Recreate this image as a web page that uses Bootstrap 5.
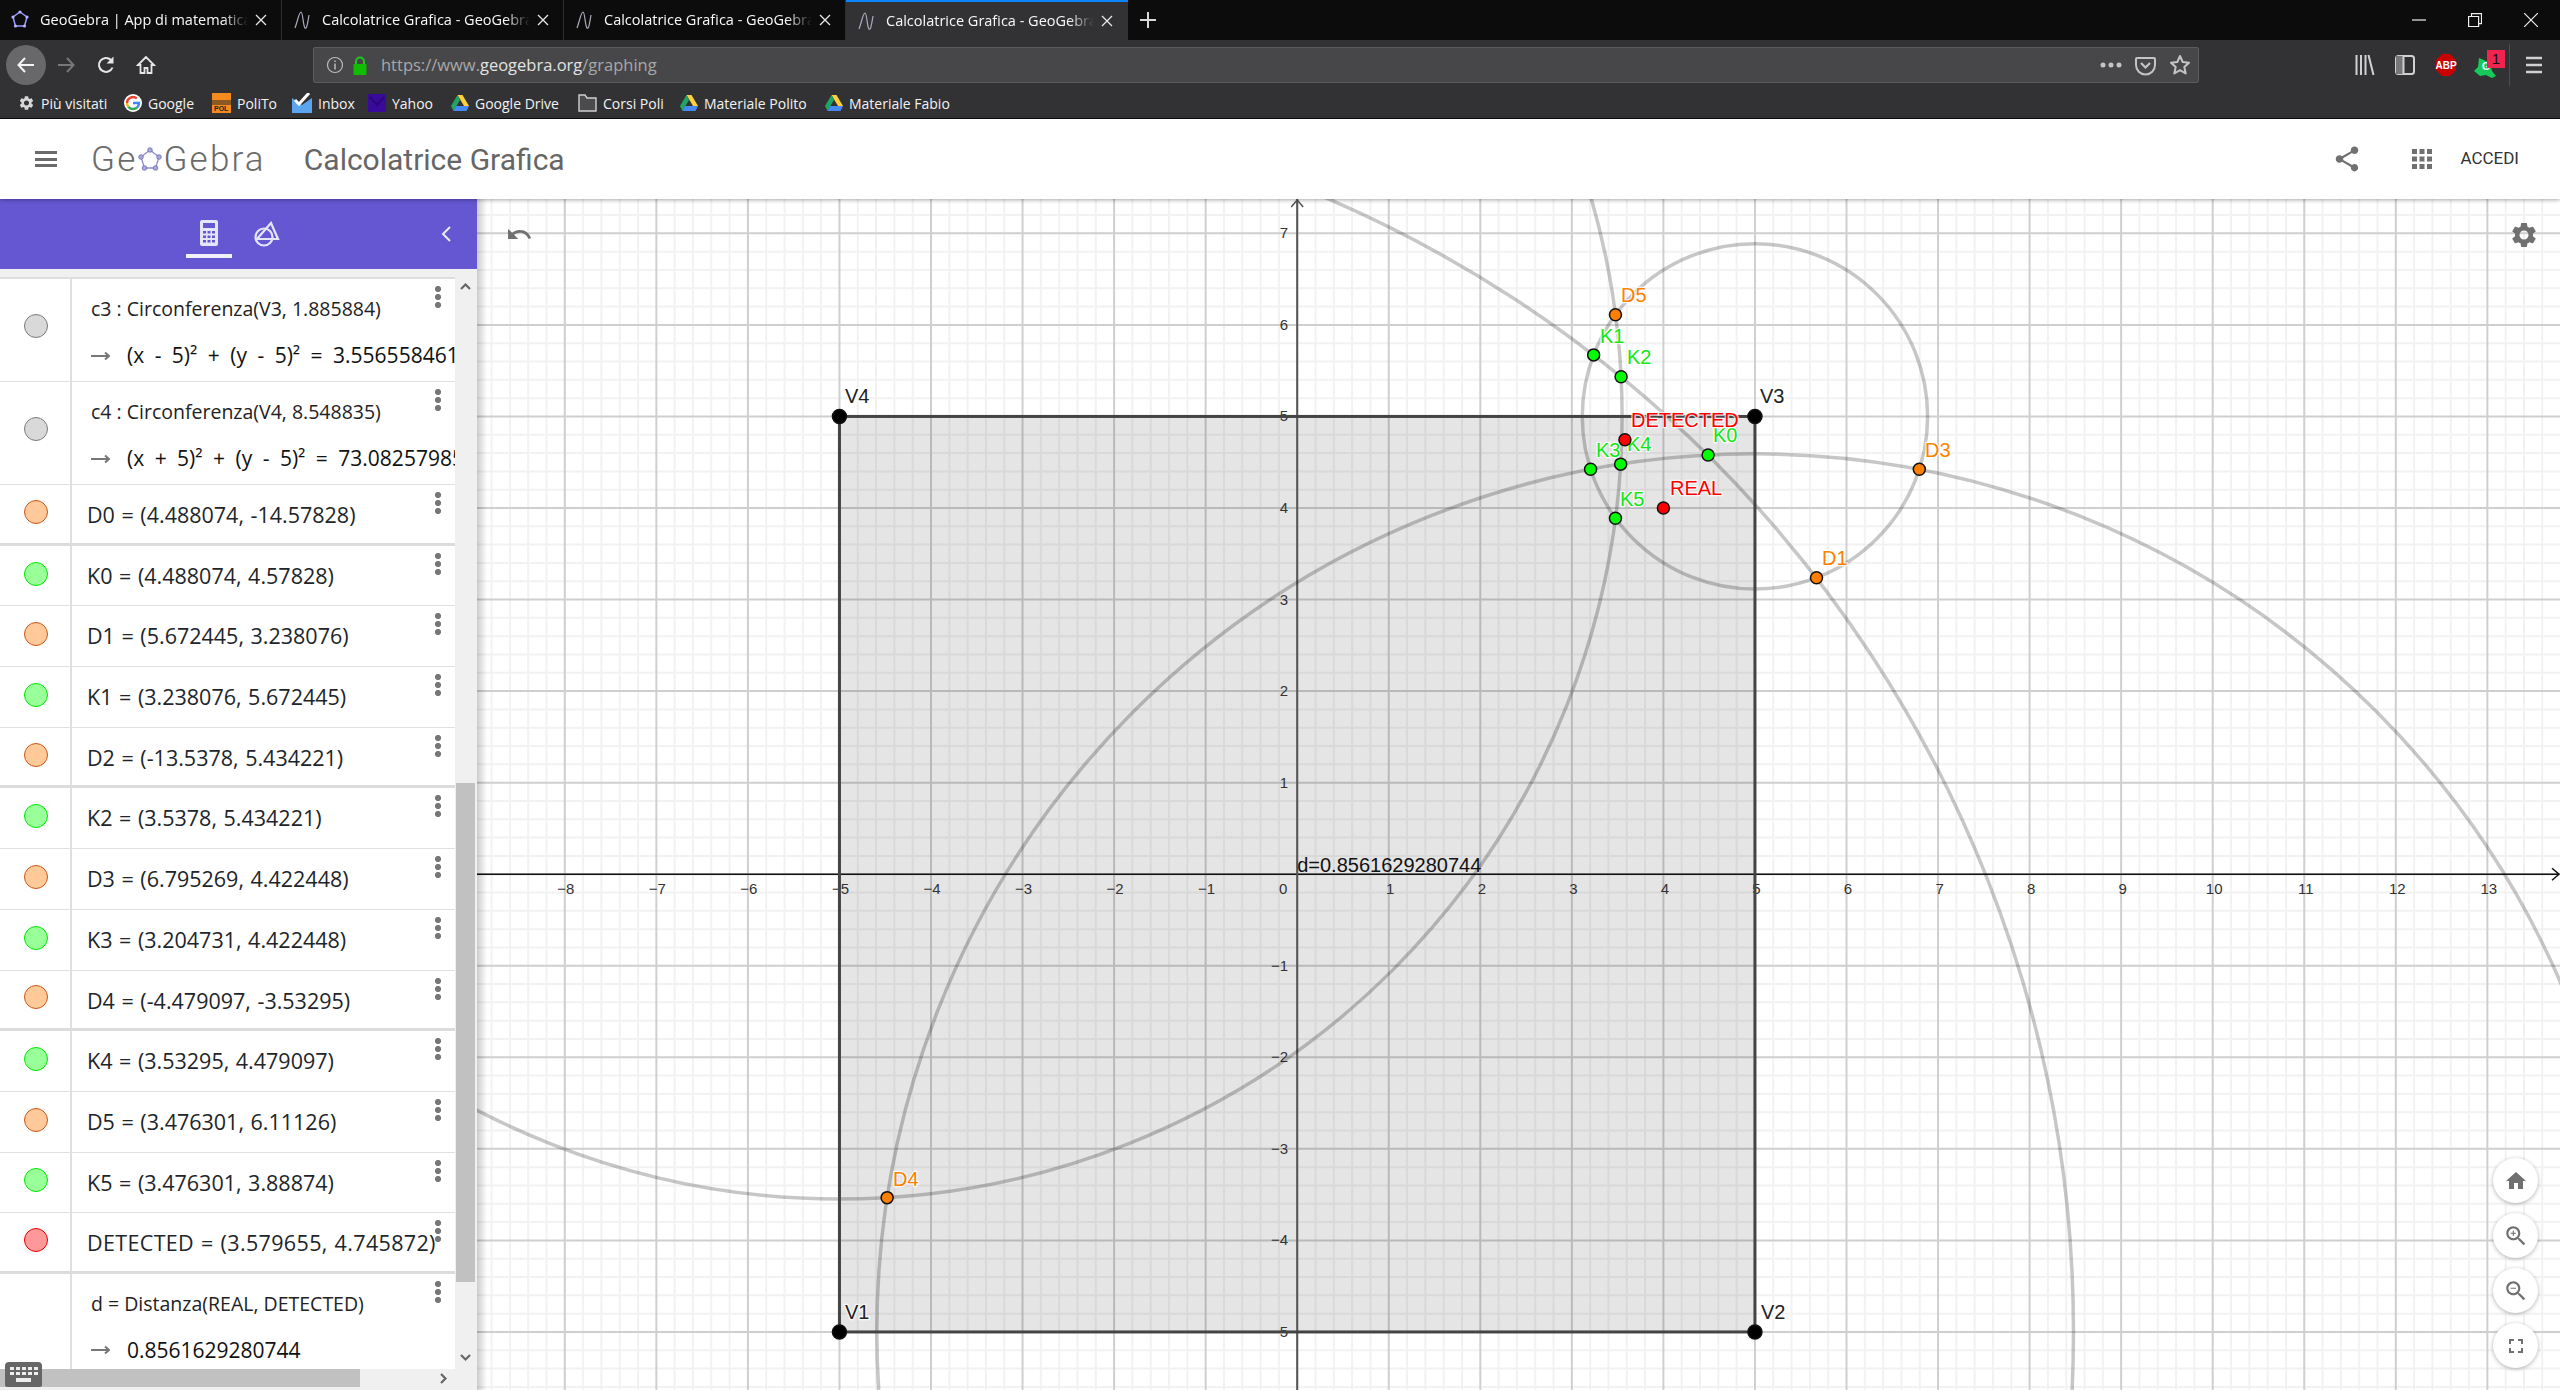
<!DOCTYPE html>
<html lang="it">
  <head>
    <meta charset="UTF-8" />
    <title>Calcolatrice Grafica - GeoGebra</title>
    <link href="https://cdn.jsdelivr.net/npm/bootstrap@5.3.3/dist/css/bootstrap.min.css" rel="stylesheet" />
    <style>
      html, body { height: 100%; overflow: hidden; background: #fff; }
      .browser-font { font-family: "Open Sans", "Liberation Sans", sans-serif; }

      /* browser chrome */
      .tab-strip { height: 40px; background: #0c0c0c; color: #f9f9fa; font-size: 14.5px; }
      .ff-tab { width: 282px; height: 40px; position: relative; border-right: 1px solid #2e2e2e; }
      .ff-tab.selected { background: #323234; border-right: 0; border-top: 2px solid #0a84ff; }
      .tab-fav { width: 40px; flex: none; }
      .tab-title { width: 208px; flex: none; white-space: nowrap; overflow: hidden;
        -webkit-mask-image: linear-gradient(to right, #000 88%, transparent 100%);
        mask-image: linear-gradient(to right, #000 88%, transparent 100%); }
      .tab-close { margin-left: 7px; flex: none; }
      .tab-plus { margin-left: 12px; }
      .win-controls { margin-left: auto; gap: 42px; padding-right: 22px; }
      .nav-bar { height: 46px; background: #323234; padding-left: 6px; padding-top: 4px; }
      .back-btn { width: 40px; height: 40px; border-radius: 50%; background: #68686a; }
      .nav-icon { width: 40px; flex: none; }
      .url-bar { position: relative; margin-left: 147px; width: 1886px; height: 36px; background: #474749;
        border: 1px solid #5b5b5d; border-radius: 2px; font-size: 16.5px; color: #a8a8aa; padding-left: 12px; }
      .url-bar b { font-weight: 400; color: #e2e2e3; }
      .url-text { margin-left: 5px; }
      .url-end { margin-left: auto; gap: 13px; padding-right: 7px; }
      .tool-icons { margin-left: 156px; gap: 16px; }
      .tool-sep { width: 1px; height: 42px; background: #4c4c4e; margin-left: -12px; }
      .ext-badge { width: 32px; height: 30px; }
      .ext-count { left: 14px; top: 0; width: 18px; height: 18px; background: #f0244f; color: #111; font: 15px/18px "Liberation Sans", sans-serif; }
      .ext-splat { left: 0; top: 6px; }
      .bookmark-bar { height: 33px; background: #323234; border-bottom: 1px solid #0c0c0c; color: #f2f2f3; font-size: 14px; padding-left: 17px; }
      .bm-item { position: absolute; top: 1px; height: 32px; gap: 6px; white-space: nowrap; }

      /* app header */
      .app-top { height: 80px; background: #fff; position: relative; z-index: 5; box-shadow: 0 1px 4px rgba(0,0,0,.35); color: #666; font-family: Roboto, sans-serif; }
      .app-menu { margin-left: 35px; width: 22px; height: 16px; border-top: 3px solid #6a6a6a; border-bottom: 3px solid #6a6a6a; position: relative; }
      .app-menu::after { content: ""; position: absolute; left: 0; right: 0; top: 3.5px; height: 3px; background: #6a6a6a; }
      .logo-word { margin-left: 34px; font-size: 35px; font-weight: 300; letter-spacing: 2.2px; color: #6b6b6b; line-height: 1; }
      .page-name { margin-left: 38px; font-size: 30px; color: #666; }
      .apps-icon { margin-left: 45px; }
      .accedi { font-size: 17px; color: #333; margin-right: 41px; margin-left: 23px; }

      /* algebra panel */
      .work-area { height: 1191px; position: relative; }
      .side-panel { width: 477px; flex: none; position: relative; background: #f0f0f0; }
      .panel-head { height: 70px; background: #6557d2; position: relative; }
      .calc-tab { width: 46px; height: 52px; margin-left: 186px; margin-top: -4px; border-bottom: 4px solid #f1f0fb; padding-top: 6px; }
      .geo-tab { margin-left: 22px; }
      .panel-collapse { position: absolute; left: 439px; top: 25px; }
      .algebra { position: absolute; left: 0; top: 78px; width: 455px; height: 1092px; overflow: hidden; background: #fff;
        font-family: "Open Sans", sans-serif; font-size: 21.5px; color: #111; border-top: 2px solid #dedede; }
      .algebra-row { position: relative; height: 60.7px; flex: none; background: #fff; border: 0; border-bottom: 2px solid #e0e0e0; padding: 0; border-radius: 0; }
      .algebra-row.def { height: 103px; }
      .algebra-row.heavy { border-bottom-width: 3px; border-bottom-color: #dcdcdc; }
      .algebra-row.last { height: 130px; border-bottom: 0; }
      .marble-cell { width: 72px; flex: none; border-right: 2px solid #e0e0e0; padding: 0 0 4px 2px; }
      .def .marble-cell { padding-bottom: 8px; }
      .marble { width: 24px; height: 24px; border-radius: 50%; border: 1.5px solid; display: block; }
      .marble-grey { background: #d9d9d9; border-color: #7c7c7c; }
      .marble-orange { background: #ffc999; border-color: #c9581a; }
      .marble-green { background: #99ff99; border-color: #00e600; }
      .marble-red { background: #ff9999; border-color: #e60000; }
      .row-value { padding: 15px 0 0 15px; line-height: 30px; white-space: nowrap; word-spacing: 1px; }
      .row-value.caps { letter-spacing: .35px; }
      .row-def { padding: 6px 0 0 19px; line-height: 47px; white-space: nowrap; font-size: 19.5px; color: #222; }
      .row-def .calc-line { display: flex; align-items: center; font-size: 21px; color: #111; word-spacing: 5px; white-space: pre; }
      .row-def svg { margin-right: 17px; flex: none; }
      .kebab { position: absolute; right: 14px; top: 7px; width: 6px; height: 22px;
        background: radial-gradient(circle at 3px 3px, #777 2.8px, transparent 3.2px) 0 0 / 6px 8px repeat-y; }
      .scroll-y { position: absolute; left: 455px; top: 78px; width: 21px; height: 1113px; background: #f0f0f0; }
      .scroll-y-thumb { position: absolute; left: 1px; top: 506px; width: 19px; height: 499px; background: #c1c1c1; }
      .scroll-up { left: 4px; top: 5px; }
      .scroll-down { left: 4px; top: 1076px; }
      .scroll-x { position: absolute; left: 0; top: 1170px; width: 455px; height: 18px; background: #f0f0f0; }
      .scroll-x-thumb { position: absolute; left: 0; top: 0; width: 360px; height: 18px; background: #c1c1c1; }
      .scroll-right { left: 439px; top: 3px; }
      .kbd-btn { position: absolute; left: 5px; top: 1163px; width: 37px; height: 25px; background: #666; border-radius: 4px 4px 2px 2px; }

      /* graphics view */
      .graph-view { flex: 1 1 auto; position: relative; overflow: hidden; background: #fff; }
      .graph-view > svg { display: block; }
      .graph-shade { position: absolute; left: 0; top: 0; bottom: 0; width: 10px; background: linear-gradient(to right, rgba(0,0,0,.2), rgba(0,0,0,0)); }
      .undo-icon { position: absolute; left: 31px; top: 29px; }
      .gear-icon { position: absolute; left: 2032px; top: 21px; }
      .zoom-stack { position: absolute; left: 2016px; top: 959px; gap: 10px; }
      .zoom-btn { width: 45px; height: 45px; border-radius: 50%; background: #fff; box-shadow: 0 1px 4px rgba(0,0,0,.3); }
      .axis-num { font: 15px "Liberation Sans", Arial, sans-serif; fill: #333; }
      .geo-label { font: 20px "Liberation Sans", Arial, sans-serif; paint-order: stroke; stroke: #fff; stroke-width: 2.5px; stroke-opacity: .8; }
    </style>
  </head>
  <body class="d-flex flex-column browser-font">
    <!-- tabs -->
    <div class="tab-strip d-flex align-items-center">
      <div class="ff-tab d-flex align-items-center">
        <span class="tab-fav d-flex justify-content-center">
          <svg width="18" height="20" viewBox="0 0 18 20"><path d="M9 2l7 5-2.500 9h-9L2 7z" fill="none" stroke="#99f" stroke-width="1.500"/><g fill="#b3b3ff"><circle cx="9" cy="2" r="1.600"/><circle cx="16" cy="7" r="1.600"/><circle cx="13.500" cy="16" r="1.600"/><circle cx="4.500" cy="16" r="1.600"/><circle cx="2" cy="7" r="1.600"/></g></svg>
        </span>
        <span class="tab-title">GeoGebra | App di matematica</span>
        <svg class="tab-close" width="12" height="12" viewBox="0 0 12 12"><path d="M1 1l10 10M11 1L1 11" stroke="#e8e8e8" stroke-width="1.300"/></svg>
      </div>
      <div class="ff-tab d-flex align-items-center">
        <span class="tab-fav d-flex justify-content-center"><svg width="18" height="20" viewBox="0 0 18 20"><path d="M2 18C5 10 6 2 8 2s2 14 4 16 3-8 4-13" fill="none" stroke="#aab" stroke-width="1.200"/></svg></span>
        <span class="tab-title">Calcolatrice Grafica - GeoGebra</span>
        <svg class="tab-close" width="12" height="12" viewBox="0 0 12 12"><path d="M1 1l10 10M11 1L1 11" stroke="#e8e8e8" stroke-width="1.300"/></svg>
      </div>
      <div class="ff-tab d-flex align-items-center">
        <span class="tab-fav d-flex justify-content-center"><svg width="18" height="20" viewBox="0 0 18 20"><path d="M2 18C5 10 6 2 8 2s2 14 4 16 3-8 4-13" fill="none" stroke="#aab" stroke-width="1.200"/></svg></span>
        <span class="tab-title">Calcolatrice Grafica - GeoGebra</span>
        <svg class="tab-close" width="12" height="12" viewBox="0 0 12 12"><path d="M1 1l10 10M11 1L1 11" stroke="#e8e8e8" stroke-width="1.300"/></svg>
      </div>
      <div class="ff-tab selected d-flex align-items-center">
        <span class="tab-fav d-flex justify-content-center"><svg width="18" height="20" viewBox="0 0 18 20"><path d="M2 18C5 10 6 2 8 2s2 14 4 16 3-8 4-13" fill="none" stroke="#aab" stroke-width="1.200"/></svg></span>
        <span class="tab-title">Calcolatrice Grafica - GeoGebra</span>
        <svg class="tab-close" width="12" height="12" viewBox="0 0 12 12"><path d="M1 1l10 10M11 1L1 11" stroke="#e8e8e8" stroke-width="1.300"/></svg>
      </div>
      <svg class="tab-plus" width="16" height="16" viewBox="0 0 16 16"><path d="M8 0v16M0 8h16" stroke="#d8d8d8" stroke-width="2"/></svg>
      <div class="win-controls d-flex align-items-center">
        <svg width="14" height="14" viewBox="0 0 14 14"><path d="M0 7h14" stroke="#eee" stroke-width="1.200"/></svg>
        <svg width="14" height="14" viewBox="0 0 14 14"><path d="M3.500 3V.6h10v10H11M.6 3.500h10v10H.6z" fill="none" stroke="#eee" stroke-width="1.200"/></svg>
        <svg width="14" height="14" viewBox="0 0 14 14"><path d="M0 0l14 14M14 0L0 14" stroke="#eee" stroke-width="1.200"/></svg>
      </div>
    </div>

    <!-- toolbar -->
    <div class="nav-bar d-flex align-items-center">
      <div class="back-btn d-flex align-items-center justify-content-center flex-none">
        <svg width="20" height="18" viewBox="0 0 20 18"><path d="M18 9H3M9 2L2.500 9 9 16" fill="none" stroke="#f4f4f4" stroke-width="2"/></svg>
      </div>
      <span class="nav-icon d-flex justify-content-center"><svg width="20" height="18" viewBox="0 0 20 18"><path d="M2 9h15M11 2l6.500 7L11 16" fill="none" stroke="#77777a" stroke-width="2"/></svg></span>
      <span class="nav-icon d-flex justify-content-center"><svg width="20" height="20" viewBox="0 0 20 20"><path d="M16.500 12.500A7 7 0 1 1 15 5" fill="none" stroke="#e6e6e6" stroke-width="2"/><path d="M17.500 1.500v7h-7z" fill="#e6e6e6"/></svg></span>
      <span class="nav-icon d-flex justify-content-center"><svg width="20" height="20" viewBox="0 0 20 20"><path d="M10 2L2 10h2.500v8h4v-5h3v5h4v-8H18z" fill="none" stroke="#e6e6e6" stroke-width="1.800"/></svg></span>
      <div class="url-bar d-flex align-items-center">
        <svg width="18" height="18" viewBox="0 0 18 18" class="me-2"><circle cx="9" cy="9" r="7.500" fill="none" stroke="#bbb" stroke-width="1.200"/><path d="M9 4.500v1.500M9 7.500V13.500" stroke="#bbb" stroke-width="1.500"/></svg>
        <svg width="16" height="19" viewBox="0 0 16 19" class="me-2"><path d="M4 9V5.500a4 4 0 0 1 8 0V9" fill="none" stroke="#1fc41f" stroke-width="2"/><rect x="1.500" y="8" width="13" height="11" rx="1" fill="#12bc00"/></svg>
        <span class="url-text">https://www.<b>geogebra.org</b>/graphing</span>
        <div class="url-end d-flex align-items-center">
          <svg width="22" height="6" viewBox="0 0 22 6"><g fill="#c4c4c4"><circle cx="3" cy="3" r="2.500"/><circle cx="11" cy="3" r="2.500"/><circle cx="19" cy="3" r="2.500"/></g></svg>
          <svg width="21" height="21" viewBox="0 0 21 21"><path d="M2 3h17a1 1 0 0 1 1 1v6a9.500 9.500 0 0 1-19 0V4a1 1 0 0 1 1-1z" fill="none" stroke="#c4c4c4" stroke-width="2"/><path d="M6 8l4.500 4.500L15 8" fill="none" stroke="#c4c4c4" stroke-width="2.200"/></svg>
          <svg width="22" height="22" viewBox="0 0 22 22"><path d="M11 2l2.700 6 6.300.7-4.700 4.300 1.400 6.500L11 16.200 5.300 19.500 6.700 13 2 8.700 8.300 8z" fill="none" stroke="#c4c4c4" stroke-width="2" stroke-linejoin="round"/></svg>
        </div>
      </div>
      <div class="tool-icons d-flex align-items-center">
        <svg width="20" height="22" viewBox="0 0 20 22"><path d="M1.500 1v20M6 1v20M10.500 1v20M13.500 1l5 20" stroke="#d0d0d0" stroke-width="2" fill="none"/></svg>
        <svg width="20" height="20" viewBox="0 0 20 20" class="mx-1"><rect x="1" y="1" width="18" height="18" rx="2.500" fill="none" stroke="#d0d0d0" stroke-width="2"/><rect x="1" y="1" width="7" height="18" fill="#77777a"/><path d="M8.500 1v18" stroke="#d0d0d0" stroke-width="2"/></svg>
        <svg width="22" height="24" viewBox="0 0 22 24"><path d="M7 1h8l6 6v10l-6 6H7l-6-6V7z" fill="#c80000"/><text x="11" y="15.500" text-anchor="middle" font-family="Liberation Sans" font-weight="700" font-size="10" fill="#fff">ABP</text></svg>
        <div class="ext-badge position-relative">
          <svg width="24" height="24" viewBox="0 0 24 24" class="ext-splat position-absolute"><path d="M6 2l5 2 6 3 2 8 4 5-4 2-6-3-6 1-6-5 4-4z" fill="#16c95a"/><text x="9" y="14" font-family="Liberation Sans" font-weight="700" font-size="10" fill="#fff">G</text></svg>
          <span class="ext-count position-absolute text-center">1</span>
        </div>
        <span class="tool-sep"></span>
        <svg width="16" height="18" viewBox="0 0 16 18"><path d="M0 2h16M0 9h16M0 16h16" stroke="#d0d0d0" stroke-width="2.600"/></svg>
      </div>
    </div>

    <!-- bookmarks -->
    <div class="bookmark-bar position-relative">
      <div class="bm-item d-flex align-items-center" style="left: 18px;">
        <svg width="17" height="18" viewBox="0 0 24 24"><path fill="#d6d6d6" d="M19.140 12.940c.040-.3.060-.61.060-.94 0-.32-.020-.64-.070-.94l2.030-1.580c.18-.14.230-.41.120-.61l-1.920-3.320c-.12-.22-.37-.29-.59-.22l-2.390.96c-.5-.38-1.030-.7-1.620-.94l-.36-2.540c-.040-.24-.24-.41-.48-.41h-3.840c-.24 0-.43.170-.47.41l-.36 2.540c-.59.24-1.130.57-1.620.94l-2.390-.96c-.22-.080-.47 0-.59.220L2.740 8.870c-.12.210-.080.470.12.610l2.030 1.580c-.05.3-.09.630-.09.940s.020.640.070.940l-2.030 1.580c-.18.14-.23.41-.12.61l1.920 3.320c.12.220.37.290.59.220l2.390-.96c.5.380 1.030.7 1.620.94l.36 2.540c.05.240.24.410.48.410h3.840c.24 0 .44-.17.470-.41l.36-2.540c.59-.24 1.130-.56 1.620-.94l2.390.96c.22.080.47 0 .59-.22l1.920-3.320c.12-.22.070-.47-.12-.61l-2.010-1.580zM12 15.600c-1.980 0-3.600-1.620-3.600-3.600s1.620-3.600 3.600-3.600 3.600 1.620 3.600 3.600-1.620 3.600-3.600 3.600z"/></svg>
        <span>Più visitati</span>
      </div>
      <div class="bm-item d-flex align-items-center" style="left: 124px;">
        <svg width="18" height="18" viewBox="0 0 18 18"><circle cx="9" cy="9" r="9" fill="#fff"/><path d="M3 9a6 6 0 0 1 9.800-4.600" fill="none" stroke="#ea4335" stroke-width="2.400"/><path d="M3 9a6 6 0 0 0 1.300 3.700" fill="none" stroke="#fbbc05" stroke-width="2.400"/><path d="M4.300 12.700A6 6 0 0 0 13 13.500" fill="none" stroke="#34a853" stroke-width="2.400"/><path d="M9 9h6a6 6 0 0 1-2 4.500" fill="none" stroke="#4285f4" stroke-width="2.400"/></svg>
        <span>Google</span>
      </div>
      <div class="bm-item d-flex align-items-center" style="left: 212px;">
        <svg width="19" height="20" viewBox="0 0 19 20"><rect width="19" height="20" fill="#f58a1f"/><rect y="7" width="19" height="5" fill="#8a5a22"/><text x="2" y="18" font-family="Liberation Sans" font-weight="700" font-size="7" fill="#222">POL</text></svg>
        <span>PoliTo</span>
      </div>
      <div class="bm-item d-flex align-items-center" style="left: 292px;">
        <svg width="20" height="20" viewBox="0 0 20 20"><path d="M0 5l10 7 10-7v15H0z" fill="#5aa5ee"/><path d="M3 7l4 4 10-11" fill="none" stroke="#fff" stroke-width="3"/></svg>
        <span>Inbox</span>
      </div>
      <div class="bm-item d-flex align-items-center" style="left: 368px;">
        <svg width="18" height="18" viewBox="0 0 18 18"><rect width="18" height="18" fill="#3a0a9a"/><path d="M2 3l7 8 7-8" fill="none" stroke="#2a0778" stroke-width="2"/></svg>
        <span>Yahoo</span>
      </div>
      <div class="bm-item d-flex align-items-center" style="left: 451px;">
        <svg width="18" height="17" viewBox="0 0 18 17"><path d="M6.500 0h5L18 11h-5z" fill="#ffcf3f"/><path d="M6.500 0L0 11l2.500 5 6.500-11z" fill="#1fa463"/><path d="M2.500 16h13l2.500-5H5z" fill="#4688f4"/></svg>
        <span>Google Drive</span>
      </div>
      <div class="bm-item d-flex align-items-center" style="left: 578px;">
        <svg width="19" height="18" viewBox="0 0 19 18"><path d="M1 17V1h6l2 3h9v13z" fill="#4b4b4d" stroke="#d0d0d0" stroke-width="1.400"/></svg>
        <span>Corsi Poli</span>
      </div>
      <div class="bm-item d-flex align-items-center" style="left: 680px;">
        <svg width="18" height="17" viewBox="0 0 18 17"><path d="M6.500 0h5L18 11h-5z" fill="#ffcf3f"/><path d="M6.500 0L0 11l2.500 5 6.500-11z" fill="#1fa463"/><path d="M2.500 16h13l2.500-5H5z" fill="#4688f4"/></svg>
        <span>Materiale Polito</span>
      </div>
      <div class="bm-item d-flex align-items-center" style="left: 825px;">
        <svg width="18" height="17" viewBox="0 0 18 17"><path d="M6.500 0h5L18 11h-5z" fill="#ffcf3f"/><path d="M6.500 0L0 11l2.500 5 6.500-11z" fill="#1fa463"/><path d="M2.500 16h13l2.500-5H5z" fill="#4688f4"/></svg>
        <span>Materiale Fabio</span>
      </div>
    </div>

    <!-- app header -->
    <header class="app-top d-flex align-items-center">
      <div class="app-menu"></div>
      <div class="logo-word d-flex align-items-center">
        <span>Ge</span>
        <svg width="26" height="27" viewBox="0 0 26 27" class="mx-0"><path d="M13 4l9 7-3.500 11h-11L4 11z" fill="none" stroke="#8f8fc8" stroke-width="1.300"/><g fill="#a9a7e6" stroke="#66639c" stroke-width=".7"><circle cx="13" cy="4" r="2.300"/><circle cx="22" cy="11" r="2.300"/><circle cx="18.500" cy="22" r="2.300"/><circle cx="7.500" cy="22" r="2.300"/><circle cx="4" cy="11" r="2.300"/></g></svg>
        <span>Gebra</span>
      </div>
      <div class="page-name">Calcolatrice Grafica</div>
      <div class="ms-auto d-flex align-items-center">
        <svg width="30" height="30" viewBox="0 0 24 24"><path fill="#707070" d="M18 16.080c-.76 0-1.440.3-1.960.77L8.910 12.700c.05-.23.09-.46.09-.7s-.04-.47-.09-.7l7.050-4.110c.54.5 1.250.81 2.040.81 1.660 0 3-1.340 3-3s-1.340-3-3-3-3 1.340-3 3c0 .24.040.47.090.7L8.040 9.810C7.500 9.310 6.790 9 6 9c-1.660 0-3 1.340-3 3s1.340 3 3 3c.79 0 1.500-.31 2.040-.81l7.120 4.160c-.05.21-.08.43-.08.65 0 1.610 1.310 2.920 2.920 2.920 1.610 0 2.920-1.310 2.920-2.920s-1.310-2.920-2.920-2.920z"/></svg>
        <svg width="30" height="30" viewBox="0 0 24 24" class="apps-icon"><path fill="#707070" d="M4 8h4V4H4v4zm6 12h4v-4h-4v4zm-6 0h4v-4H4v4zm0-6h4v-4H4v4zm6 0h4v-4h-4v4zm6-10v4h4V4h-4zm-6 4h4V4h-4v4zm6 6h4v-4h-4v4zm0 6h4v-4h-4v4z"/></svg>
        <span class="accedi">ACCEDI</span>
      </div>
    </header>

    <main class="work-area d-flex">
      <!-- algebra view -->
      <aside class="side-panel">
        <div class="panel-head d-flex align-items-center">
          <div class="calc-tab d-flex justify-content-center align-items-center">
            <svg width="18" height="26" viewBox="0 0 18 26"><rect width="18" height="26" rx="2" fill="#e6e4f8"/><rect x="3" y="3" width="12" height="5" fill="#6557d2"/><g fill="#6557d2"><rect x="3" y="11" width="3" height="2.500"/><rect x="7.500" y="11" width="3" height="2.500"/><rect x="12" y="11" width="3" height="2.500"/><rect x="3" y="15.500" width="3" height="2.500"/><rect x="7.500" y="15.500" width="3" height="2.500"/><rect x="12" y="15.500" width="3" height="2.500"/><rect x="3" y="20" width="3" height="2.500"/><rect x="7.500" y="20" width="3" height="2.500"/><rect x="12" y="20" width="3" height="2.500"/></g></svg>
          </div>
          <svg class="geo-tab" width="26" height="26" viewBox="0 0 26 26"><circle cx="10" cy="16" r="8.500" fill="none" stroke="#e6e4f8" stroke-width="2.200"/><path d="M17 2l7 16H3z" fill="none" stroke="#e6e4f8" stroke-width="2.200"/></svg>
          <svg class="panel-collapse" width="14" height="20" viewBox="0 0 14 20"><path d="M11 3L4 10l7 7" fill="none" stroke="#eceafa" stroke-width="2"/></svg>
        </div>
        <div class="algebra list-group list-group-flush">
          <div class="algebra-row def list-group-item d-flex">
            <div class="marble-cell d-flex align-items-center justify-content-center"><span class="marble marble-grey"></span></div>
            <div class="row-def"><div>c3 : Circonferenza(V3, 1.885884)</div><div class="calc-line"><svg width="19" height="10" viewBox="0 0 19 10"><path d="M0 5h17M14 1.500L18 5l-4 3.500" fill="none" stroke="#777" stroke-width="2"/></svg>(x - 5)² + (y - 5)² = 3.5565584614</div></div>
            <span class="kebab"></span>
          </div>
          <div class="algebra-row def list-group-item d-flex">
            <div class="marble-cell d-flex align-items-center justify-content-center"><span class="marble marble-grey"></span></div>
            <div class="row-def"><div>c4 : Circonferenza(V4, 8.548835)</div><div class="calc-line"><svg width="19" height="10" viewBox="0 0 19 10"><path d="M0 5h17M14 1.500L18 5l-4 3.500" fill="none" stroke="#777" stroke-width="2"/></svg>(x + 5)² + (y - 5)² = 73.08257985</div></div>
            <span class="kebab"></span>
          </div>
          <div class="algebra-row heavy list-group-item d-flex"><div class="marble-cell d-flex align-items-center justify-content-center"><span class="marble marble-orange"></span></div><div class="row-value">D0 = (4.488074, -14.57828)</div><span class="kebab"></span></div>
          <div class="algebra-row list-group-item d-flex"><div class="marble-cell d-flex align-items-center justify-content-center"><span class="marble marble-green"></span></div><div class="row-value">K0 = (4.488074, 4.57828)</div><span class="kebab"></span></div>
          <div class="algebra-row list-group-item d-flex"><div class="marble-cell d-flex align-items-center justify-content-center"><span class="marble marble-orange"></span></div><div class="row-value">D1 = (5.672445, 3.238076)</div><span class="kebab"></span></div>
          <div class="algebra-row list-group-item d-flex"><div class="marble-cell d-flex align-items-center justify-content-center"><span class="marble marble-green"></span></div><div class="row-value">K1 = (3.238076, 5.672445)</div><span class="kebab"></span></div>
          <div class="algebra-row heavy list-group-item d-flex"><div class="marble-cell d-flex align-items-center justify-content-center"><span class="marble marble-orange"></span></div><div class="row-value">D2 = (-13.5378, 5.434221)</div><span class="kebab"></span></div>
          <div class="algebra-row list-group-item d-flex"><div class="marble-cell d-flex align-items-center justify-content-center"><span class="marble marble-green"></span></div><div class="row-value">K2 = (3.5378, 5.434221)</div><span class="kebab"></span></div>
          <div class="algebra-row list-group-item d-flex"><div class="marble-cell d-flex align-items-center justify-content-center"><span class="marble marble-orange"></span></div><div class="row-value">D3 = (6.795269, 4.422448)</div><span class="kebab"></span></div>
          <div class="algebra-row list-group-item d-flex"><div class="marble-cell d-flex align-items-center justify-content-center"><span class="marble marble-green"></span></div><div class="row-value">K3 = (3.204731, 4.422448)</div><span class="kebab"></span></div>
          <div class="algebra-row heavy list-group-item d-flex"><div class="marble-cell d-flex align-items-center justify-content-center"><span class="marble marble-orange"></span></div><div class="row-value">D4 = (-4.479097, -3.53295)</div><span class="kebab"></span></div>
          <div class="algebra-row list-group-item d-flex"><div class="marble-cell d-flex align-items-center justify-content-center"><span class="marble marble-green"></span></div><div class="row-value">K4 = (3.53295, 4.479097)</div><span class="kebab"></span></div>
          <div class="algebra-row list-group-item d-flex"><div class="marble-cell d-flex align-items-center justify-content-center"><span class="marble marble-orange"></span></div><div class="row-value">D5 = (3.476301, 6.11126)</div><span class="kebab"></span></div>
          <div class="algebra-row list-group-item d-flex"><div class="marble-cell d-flex align-items-center justify-content-center"><span class="marble marble-green"></span></div><div class="row-value">K5 = (3.476301, 3.88874)</div><span class="kebab"></span></div>
          <div class="algebra-row heavy list-group-item d-flex"><div class="marble-cell d-flex align-items-center justify-content-center"><span class="marble marble-red"></span></div><div class="row-value caps">DETECTED = (3.579655, 4.745872)</div><span class="kebab"></span></div>
          <div class="algebra-row def last list-group-item d-flex">
            <div class="marble-cell"></div>
            <div class="row-def"><div>d = Distanza(REAL, DETECTED)</div><div class="calc-line"><svg width="19" height="10" viewBox="0 0 19 10"><path d="M0 5h17M14 1.500L18 5l-4 3.500" fill="none" stroke="#777" stroke-width="2"/></svg>0.8561629280744</div></div>
            <span class="kebab"></span>
          </div>
        </div>
        <div class="scroll-y">
          <svg class="scroll-up position-absolute" width="13" height="9" viewBox="0 0 13 9"><path d="M2 7l4.500-4.500L11 7" fill="none" stroke="#666" stroke-width="2.200"/></svg>
          <div class="scroll-y-thumb"></div>
          <svg class="scroll-down position-absolute" width="13" height="9" viewBox="0 0 13 9"><path d="M2 2l4.500 4.500L11 2" fill="none" stroke="#666" stroke-width="2.200"/></svg>
        </div>
        <div class="scroll-x">
          <div class="scroll-x-thumb"></div>
          <svg class="scroll-right position-absolute" width="9" height="13" viewBox="0 0 9 13"><path d="M2 2l4.500 4.500L2 11" fill="none" stroke="#666" stroke-width="2.200"/></svg>
        </div>
        <div class="kbd-btn">
          <svg class="d-block" width="37" height="25" viewBox="0 0 37 25"><g fill="#eee"><rect x="5" y="5" width="4" height="3"/><rect x="11" y="5" width="4" height="3"/><rect x="17" y="5" width="4" height="3"/><rect x="23" y="5" width="4" height="3"/><rect x="29" y="5" width="4" height="3"/><rect x="5" y="10" width="4" height="3"/><rect x="11" y="10" width="4" height="3"/><rect x="17" y="10" width="4" height="3"/><rect x="23" y="10" width="4" height="3"/><rect x="29" y="10" width="4" height="3"/><rect x="11" y="16" width="15" height="4"/></g></svg>
        </div>
      </aside>

      <!-- graphics view -->
      <section class="graph-view">
        <svg id="plot" width="2083" height="1191" viewBox="0 0 2083 1191"></svg>
        <div class="graph-shade"></div>
        <svg class="undo-icon" width="26" height="14" viewBox="2 7 23 11"><path fill="#707070" d="M12.500 8c-2.650 0-5.050.99-6.900 2.600L2 7v9h9l-3.620-3.620c1.390-1.160 3.160-1.880 5.120-1.880 3.540 0 6.550 2.310 7.600 5.500l2.370-.78C21.080 11.030 17.150 8 12.500 8z"/></svg>
        <svg class="gear-icon" width="30" height="30" viewBox="0 0 24 24"><path fill="#707070" d="M19.140 12.940c.040-.3.060-.61.060-.94 0-.32-.020-.64-.070-.94l2.030-1.580c.18-.14.230-.41.120-.61l-1.920-3.320c-.12-.22-.37-.29-.59-.22l-2.390.96c-.5-.38-1.030-.7-1.620-.94l-.36-2.540c-.040-.24-.24-.41-.48-.41h-3.840c-.24 0-.43.170-.47.41l-.36 2.540c-.59.24-1.130.57-1.620.94l-2.390-.96c-.22-.080-.47 0-.59.220L2.740 8.870c-.12.210-.080.470.12.610l2.030 1.580c-.05.3-.09.630-.09.940s.020.640.070.940l-2.030 1.580c-.18.14-.23.41-.12.61l1.920 3.320c.12.220.37.290.59.220l2.390-.96c.5.380 1.030.7 1.620.94l.36 2.540c.05.240.24.410.48.410h3.840c.24 0 .44-.17.470-.41l.36-2.540c.59-.24 1.130-.56 1.620-.94l2.390.96c.22.080.47 0 .59-.22l1.920-3.320c.12-.22.070-.47-.12-.61l-2.010-1.580zM12 15.600c-1.980 0-3.600-1.620-3.600-3.600s1.620-3.600 3.600-3.600 3.600 1.620 3.600 3.600-1.620 3.600-3.600 3.600z"/></svg>
        <div class="zoom-stack d-flex flex-column">
          <div class="zoom-btn d-flex align-items-center justify-content-center"><svg width="24" height="24" viewBox="0 0 24 24"><path fill="#707070" d="M10 20v-6h4v6h5v-8h3L12 3 2 12h3v8z"/></svg></div>
          <div class="zoom-btn d-flex align-items-center justify-content-center"><svg width="26" height="26" viewBox="0 0 24 24"><path fill="#707070" d="M15.500 14h-.79l-.28-.27C15.410 12.590 16 11.110 16 9.500 16 5.910 13.090 3 9.500 3S3 5.910 3 9.500 5.910 16 9.500 16c1.610 0 3.090-.59 4.230-1.570l.27.280v.79l5 4.990L20.490 19l-4.990-5zm-6 0C7.010 14 5 11.990 5 9.500S7.010 5 9.500 5 14 7.010 14 9.500 11.990 14 9.500 14z"/><path fill="#707070" d="M12 10h-2v2H9v-2H7V9h2V7h1v2h2v1z"/></svg></div>
          <div class="zoom-btn d-flex align-items-center justify-content-center"><svg width="26" height="26" viewBox="0 0 24 24"><path fill="#707070" d="M15.500 14h-.79l-.28-.27C15.410 12.590 16 11.110 16 9.500 16 5.910 13.090 3 9.500 3S3 5.910 3 9.500 5.910 16 9.500 16c1.610 0 3.090-.59 4.230-1.570l.27.280v.79l5 4.990L20.490 19l-4.990-5zm-6 0C7.010 14 5 11.990 5 9.500S7.010 5 9.500 5 14 7.010 14 9.500 11.990 14 9.500 14zM7 9h5v1H7z"/></svg></div>
          <div class="zoom-btn d-flex align-items-center justify-content-center"><svg width="24" height="24" viewBox="0 0 24 24"><path fill="#707070" d="M7 14H5v5h5v-2H7v-3zm-2-4h2V7h3V5H5v5zm12 7h-3v2h5v-5h-2v3zM14 5v2h3v3h2V5h-5z"/></svg></div>
        </div>
      </section>
    </main>

    <script src="https://cdn.jsdelivr.net/npm/bootstrap@5.3.3/dist/js/bootstrap.bundle.min.js"></script>
    <script>
      // graphics view: page coords are (1297.2, 874.2) at the origin, 91.55px per unit
      const U = 91.55, OX = 820.2, OY = 675.2;
      const X = (v) => OX + v * U;
      const Y = (v) => OY - v * U;
      const W = 2083, H = 1191;
      let out = "";

      // grid, 5 subdivisions per unit; minor first so major sits on top
      const grid = (major) => {
        const stroke = major ? "#cfcfcf" : "#f2f2f2";
        const sw = 2;
        for (let i = -50; i <= 75; i++) {
          if ((i % 5 === 0) !== major) continue;
          const x = X(i / 5);
          if (x >= 0 && x <= W) out += `<path d="M${x} 0V${H}" stroke="${stroke}" stroke-width="${sw}"/>`;
        }
        for (let i = -30; i <= 40; i++) {
          if ((i % 5 === 0) !== major) continue;
          const y = Y(i / 5);
          if (y >= 0 && y <= H) out += `<path d="M0 ${y}H${W}" stroke="${stroke}" stroke-width="${sw}"/>`;
        }
      };
      grid(false);
      grid(true);

      // square V1 V2 V3 V4
      out += `<rect x="${X(-5)}" y="${Y(5)}" width="${10 * U}" height="${10 * U}" fill="#000" fill-opacity=".1"/>`;

      // axes
      out += `<path d="M0 ${OY}H${W - 1}" stroke="#111" stroke-width="1.500"/>`;
      out += `<path d="M${W - 8} ${OY - 6}L${W - 1} ${OY}L${W - 8} ${OY + 6}" fill="none" stroke="#111" stroke-width="1.500"/>`;
      out += `<path d="M${OX} 0V${H}" stroke="#555" stroke-width="2"/>`;
      out += `<path d="M${OX - 6} 8L${OX} 1L${OX + 6} 8" fill="none" stroke="#555" stroke-width="1.500"/>`;

      // tick numbers
      for (let i = -8; i <= 13; i++) {
        if (i === 0) continue;
        out += `<text class="axis-num" x="${X(i) + (i < 0 ? 1 : 1.5)}" y="${OY + 20}" text-anchor="middle">${i < 0 ? "\u2212" + -i : i}</text>`;
      }
      out += `<text class="axis-num" x="${OX - 14}" y="${OY + 20}" text-anchor="middle">0</text>`;
      for (let i = -5; i <= 7; i++) {
        if (i === 0) continue;
        out += `<text class="axis-num" x="${OX - 9}" y="${Y(i) + 5}" text-anchor="end">${i < 0 ? "\u2212" + -i : i}</text>`;
      }

      // the four circles
      [
        [-5, -5, 13.4793],
        [5, -5, 9.5916],
        [5, 5, 1.885884],
        [-5, 5, 8.548835],
      ].forEach(([cx, cy, r]) => {
        out += `<circle cx="${X(cx)}" cy="${Y(cy)}" r="${r * U}" fill="none" stroke="#000" stroke-opacity=".22" stroke-width="3.500"/>`;
      });

      out += `<rect x="${X(-5)}" y="${Y(5)}" width="${10 * U}" height="${10 * U}" fill="none" stroke="#444" stroke-width="3"/>`;

      const ORANGE = "#ff7f00", GREEN = "#00ff00", RED = "#ff0000", BLACK = "#000";
      const TEXT_GREEN = "#12e812";
      // x, y, fill, label, label page x, label page baseline, label colour
      const points = [
        [-5, -5, BLACK, "V1", 845, 1319, "#222"],
        [5, -5, BLACK, "V2", 1761, 1319, "#222"],
        [5, 5, BLACK, "V3", 1760, 403, "#222"],
        [-5, 5, BLACK, "V4", 845, 403, "#222"],
        [-4.479097, -3.53295, ORANGE, "D4", 893, 1186, ORANGE],
        [5.672445, 3.238076, ORANGE, "D1", 1822, 565, ORANGE],
        [6.795269, 4.422448, ORANGE, "D3", 1925, 457, ORANGE],
        [3.476301, 6.11126, ORANGE, "D5", 1621, 302, ORANGE],
        [3.238076, 5.672445, GREEN, "K1", 1600, 343, TEXT_GREEN],
        [3.5378, 5.434221, GREEN, "K2", 1627, 364, TEXT_GREEN],
        [4.488074, 4.57828, GREEN, "K0", 1713, 442, TEXT_GREEN],
        [3.53295, 4.479097, GREEN, "K4", 1627, 451, TEXT_GREEN],
        [3.204731, 4.422448, GREEN, "K3", 1596, 457, TEXT_GREEN],
        [3.476301, 3.88874, GREEN, "K5", 1620, 506, TEXT_GREEN],
        [3.579655, 4.745872, RED, "DETECTED", 1631, 427, RED],
        [4, 4, RED, "REAL", 1670, 495, RED],
      ];
      // labels go under the points, K4's text is overlapped by the DETECTED dot
      points.forEach(([, , , label, lx, ly, color]) => {
        out += `<text class="geo-label" x="${lx - 477}" y="${ly - 199}" fill="${color}">${label}</text>`;
      });
      points.forEach(([x, y, fill]) => {
        out += `<circle cx="${X(x)}" cy="${Y(y)}" r="${fill === BLACK ? 7 : 6}" fill="${fill}" stroke="#111" stroke-width="1.500"/>`;
      });
      out += `<text x="${OX}" y="${OY - 2}" font-family="Liberation Sans" font-size="20" fill="#111">d=0.8561629280744</text>`;

      document.getElementById("plot").innerHTML = out;
    </script>
  </body>
</html>
